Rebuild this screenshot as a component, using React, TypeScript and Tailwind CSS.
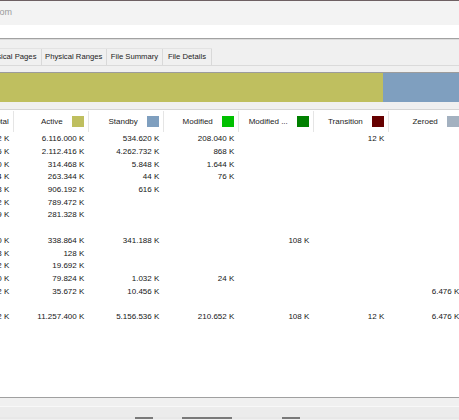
import React from 'react';

const columns = [
  { label: 'Total', swatch: '' },
  { label: 'Active', swatch: 'bg-[#bfbf5f]' },
  { label: 'Standby', swatch: 'bg-[#7f9fbf]' },
  { label: 'Modified', swatch: 'bg-[#00c000]' },
  { label: 'Modified ...', swatch: 'bg-[#008000]' },
  { label: 'Transition', swatch: 'bg-[#660000]' },
  { label: 'Zeroed', swatch: 'bg-[#a3b1c0]' },
];

const rows: string[][] = [
  ['6.858.672 K', '6.116.000 K', '534.620 K', '208.040 K', '', '12 K', ''],
  ['6.376.015 K', '2.112.416 K', '4.262.732 K', '868 K', '', '', ''],
  ['321.960 K', '314.468 K', '5.848 K', '1.644 K', '', '', ''],
  ['263.464 K', '263.344 K', '44 K', '76 K', '', '', ''],
  ['906.808 K', '906.192 K', '616 K', '', '', '', ''],
  ['789.472 K', '789.472 K', '', '', '', '', ''],
  ['281.329 K', '281.328 K', '', '', '', '', ''],
  ['', '', '', '', '', '', ''],
  ['680.160 K', '338.864 K', '341.188 K', '', '108 K', '', ''],
  ['128 K', '128 K', '', '', '', '', ''],
  ['19.692 K', '19.692 K', '', '', '', '', ''],
  ['80.880 K', '79.824 K', '1.032 K', '24 K', '', '', ''],
  ['52.602 K', '35.672 K', '10.456 K', '', '', '', '6.476 K'],
  ['', '', '', '', '', '', ''],
  ['16.631.182 K', '11.257.400 K', '5.156.536 K', '210.652 K', '108 K', '12 K', '6.476 K'],
];

const tabs = [
  { label: 'Physical Pages', w: 'w-[62px]' },
  { label: 'Physical Ranges', w: 'w-[65px]' },
  { label: 'File Summary', w: 'w-[56.6px]' },
  { label: 'File Details', w: 'w-[48.4px]' },
];

export default function App() {
  return (
    <div className="w-[459px] h-[420px] overflow-hidden flex flex-col bg-[#f0f0f0] text-[#1c1c1c] font-['Liberation_Sans',Arial,sans-serif]">
      {/* window frame + title */}
      <div className="h-px shrink-0 bg-[#6e6063]" />
      <div className="h-[24px] shrink-0 bg-[#f3f3f3] flex items-center">
        <div className="w-[12px] flex justify-end whitespace-nowrap text-[9px] text-[#9b9b9b]">
          RAMMap - Sysinternals: www.sysinternals.com
        </div>
      </div>
      <div className="h-[13px] shrink-0 bg-white" />
      <div className="h-px shrink-0 bg-[#a2a2a2]" />
      <div className="h-px shrink-0 bg-[#dcdcdc]" />

      {/* tabs */}
      <div className="h-[25px] shrink-0 flex items-end">
        <div className="flex h-[17px] ml-[-20.3px] border-t border-[#e3e3e3]">
          {tabs.map((t) => (
            <div
              key={t.label}
              className={`${t.w} shrink-0 flex items-center justify-center whitespace-nowrap text-[7.7px] border-r border-[#d9d9d9]`}
            >
              {t.label}
            </div>
          ))}
        </div>
      </div>
      <div className="h-px shrink-0 bg-[#dadada]" />

      {/* usage bar */}
      <div className="pt-[6px] pb-[7px] shrink-0">
        <div className="h-[30px] flex border-t border-[#9c9c9c]">
          <div className="w-[383px] shrink-0 bg-[#bfbf5f]" />
          <div className="flex-1 bg-[#7f9fbf]" />
        </div>
      </div>

      {/* list view */}
      <div className="h-[288px] shrink-0 bg-white border-t border-[#d5d5d5] flex flex-col">
        <div className="flex h-[22px] pt-[1px] shrink-0 ml-[-60.7px]">
          {columns.map((c) => (
            <div
              key={c.label}
              className="w-[75px] shrink-0 flex items-center justify-end gap-[9px] pr-[4.5px] border-r border-[#e5e5e5] text-[8px] whitespace-nowrap"
            >
              <span>{c.label}</span>
              {c.swatch && <div className={`w-[12px] h-[11px] ${c.swatch}`} />}
            </div>
          ))}
        </div>
        <div className="flex flex-col pt-[1px] ml-[-60.7px]">
          {rows.map((r, i) => (
            <div key={i} className="flex h-[12.7px]">
              {r.map((v, j) => (
                <div
                  key={j}
                  className="w-[75px] shrink-0 flex items-center justify-end pr-[5px] text-[8px] leading-none whitespace-nowrap text-[#161616]"
                >
                  {v}
                </div>
              ))}
            </div>
          ))}
        </div>
      </div>

      {/* bottom frame */}
      <div className="h-px shrink-0 bg-[#a0a0a0]" />
      <div className="h-[9px] shrink-0 bg-[#f0f0f0] border-b border-[#f8f8f8]" />
      <div className="h-[10px] shrink-0 bg-[#ececec]" />
      <div className="h-[2px] shrink-0 flex bg-[#e8e8e8]">
        <div className="w-[135px]" />
        <div className="w-[18px] bg-[#7a7a7a]" />
        <div className="w-[29px]" />
        <div className="w-[50px] bg-[#7a7a7a]" />
        <div className="w-[50px]" />
        <div className="w-[18px] bg-[#7a7a7a]" />
      </div>
    </div>
  );
}
